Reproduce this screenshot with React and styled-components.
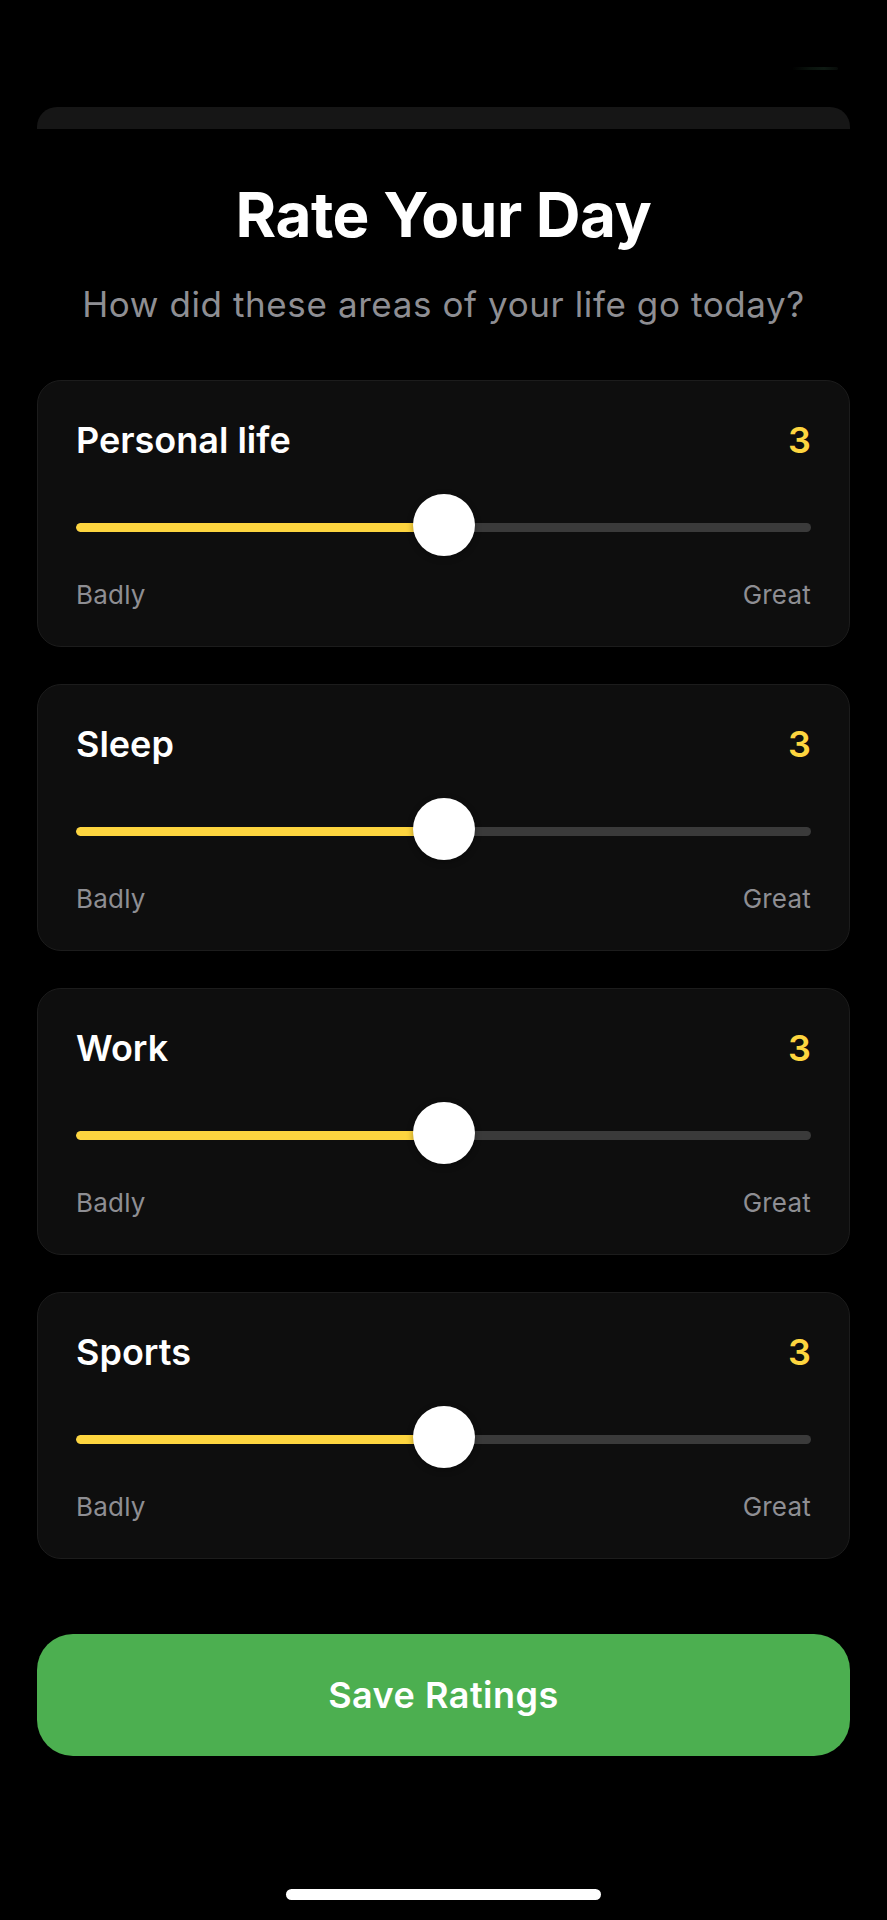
import React, { useState } from 'react';
import styled, { createGlobalStyle } from 'styled-components';

const GlobalStyle = createGlobalStyle`
	html, body {
		margin: 0;
		padding: 0;
		background: #000;
	}
	body {
		font-family: Inter, "Noto Sans", "Liberation Sans", sans-serif;
		-webkit-font-smoothing: antialiased;
	}
`;

const colors = {
	yellow: '#FDD53F',
	green: '#4CAF50',
	grey: '#8E8E93',
	track: '#3A3A3A',
	card: '#0E0E0E',
	cardBorder: '#1C1C1C',
};

const AREAS = ['Personal life', 'Sleep', 'Work', 'Sports'];

const Rating = ({ label, value, onChange }) => {
	const pct = ((value - 1) / 4) * 100;

	return (
		<Card>
			<CardHeader>
				<AreaName>{label}</AreaName>
				<AreaValue>{value}</AreaValue>
			</CardHeader>
			<Slider>
				<Track>
					<Fill style={{ width: `${pct}%` }} />
				</Track>
				<Thumb style={{ left: `${pct}%` }} />
				<RangeInput
					type="range"
					min="1"
					max="5"
					step="1"
					value={value}
					onChange={(e) => onChange(Number(e.target.value))}
				/>
			</Slider>
			<Scale>
				<span>Badly</span>
				<span>Great</span>
			</Scale>
		</Card>
	);
};

const App = () => {
	const [ratings, setRatings] = useState(AREAS.map(() => 3));

	const setRating = (i) => (v) =>
		setRatings((r) => r.map((x, j) => (j === i ? v : x)));

	return (
		<>
			<GlobalStyle />
			<Screen>
				<TopBar>
					<Glint />
				</TopBar>
				<SheetEdge />
				<Title>Rate Your Day</Title>
				<Subtitle>How did these areas of your life go today?</Subtitle>
				<CardList>
					{AREAS.map((area, i) => (
						<Rating key={area} label={area} value={ratings[i]} onChange={setRating(i)} />
					))}
				</CardList>
				<SaveButton type="button">Save Ratings</SaveButton>
				<HomeIndicator />
			</Screen>
		</>
	);
};

const Screen = styled.div`
	width: 887px;
	min-height: 1920px;
	box-sizing: border-box;
	padding: 0 37px;
	display: flex;
	flex-direction: column;
	background: #000;
	color: #fff;
`;

const TopBar = styled.div`
	height: 107px;
	display: flex;
	justify-content: flex-end;
	align-items: flex-start;
	padding-right: 12px;
`;

const Glint = styled.div`
	margin-top: 67px;
	width: 46px;
	height: 3px;
	border-radius: 2px;
	background: linear-gradient(90deg, transparent, #0a130d 40%, #0e1a13 70%, #070a08);
`;

const SheetEdge = styled.div`
	height: 22px;
	background: #161616;
	border-radius: 20px 20px 0 0;
`;

const Title = styled.h1`
	margin: 49px 0 0;
	font-size: 62px;
	line-height: 74px;
	font-weight: 700;
	letter-spacing: -0.5px;
	text-align: center;
`;

const Subtitle = styled.p`
	margin: 31px 0 0;
	font-size: 35px;
	line-height: 42px;
	font-weight: 400;
	letter-spacing: 0.6px;
	color: ${colors.grey};
	text-align: center;
	white-space: nowrap;
`;

const CardList = styled.div`
	margin-top: 55px;
	display: flex;
	flex-direction: column;
	gap: 37px;
`;

const Card = styled.div`
	background: ${colors.card};
	border: 1px solid ${colors.cardBorder};
	border-radius: 24px;
	padding: 37px 38px 35px;
	display: flex;
	flex-direction: column;
`;

const CardHeader = styled.div`
	display: flex;
	justify-content: space-between;
	align-items: center;
	height: 44px;
`;

const AreaName = styled.h3`
	margin: 0;
	font-size: 36px;
	line-height: 44px;
	font-weight: 600;
`;

const AreaValue = styled.span`
	font-size: 36px;
	line-height: 44px;
	font-weight: 600;
	color: ${colors.yellow};
`;

const Slider = styled.div`
	position: relative;
	height: 62px;
	margin-top: 32px;
	display: flex;
	align-items: center;
`;

const Track = styled.div`
	position: relative;
	width: 100%;
	height: 9px;
	margin-top: 5px;
	border-radius: 5px;
	background: ${colors.track};
	overflow: hidden;
`;

const Fill = styled.div`
	height: 100%;
	background: ${colors.yellow};
	border-radius: 5px 0 0 5px;
`;

const Thumb = styled.div`
	position: absolute;
	top: 0;
	width: 62px;
	height: 62px;
	margin-left: -31px;
	border-radius: 50%;
	background: #fff;
	box-shadow: 0 2px 6px rgba(0, 0, 0, 0.35);
`;

const RangeInput = styled.input`
	position: absolute;
	inset: 0;
	width: 100%;
	margin: 0;
	opacity: 0;
	cursor: pointer;
`;

const Scale = styled.div`
	margin-top: 23px;
	display: flex;
	justify-content: space-between;
	font-size: 26px;
	line-height: 32px;
	letter-spacing: 0.2px;
	color: ${colors.grey};
`;

const SaveButton = styled.button`
	margin-top: 75px;
	height: 122px;
	border: none;
	border-radius: 36px;
	background: ${colors.green};
	color: #fff;
	font-family: inherit;
	font-size: 36px;
	font-weight: 600;
	letter-spacing: 0.5px;
	cursor: pointer;
`;

const HomeIndicator = styled.div`
	align-self: center;
	margin-top: 133px;
	width: 315px;
	height: 11px;
	border-radius: 6px;
	background: #fff;
`;

export default App;
